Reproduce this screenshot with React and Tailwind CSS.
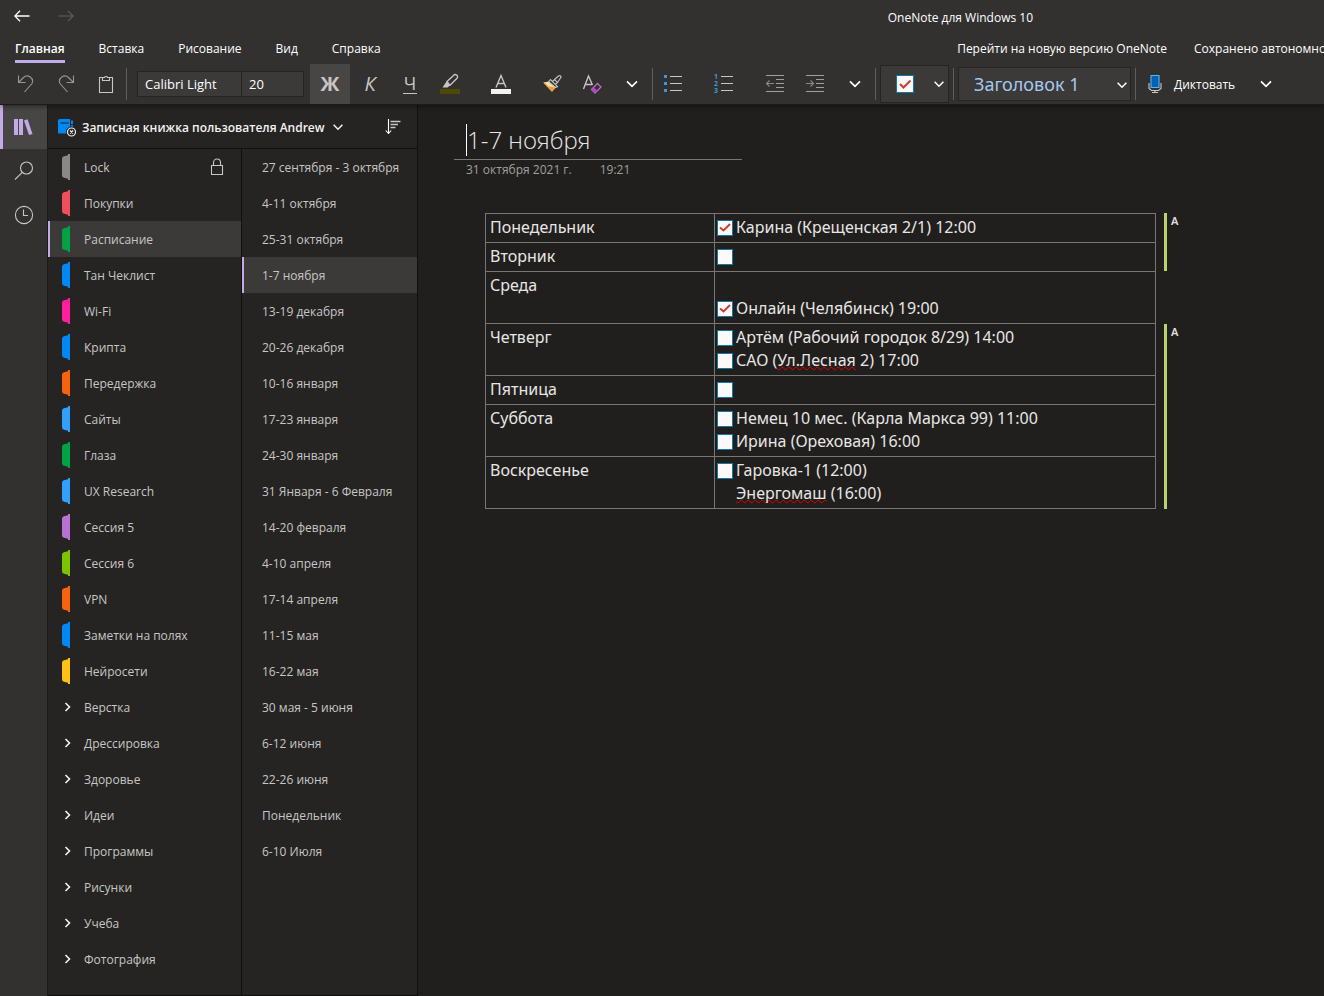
const SECTIONS = [
  { name: 'Lock', color: '#8a8886', locked: true },
  { name: 'Покупки', color: '#ef4f5a' },
  { name: 'Расписание', color: '#00a344', active: true },
  { name: 'Тан Чеклист', color: '#0088f5' },
  { name: 'Wi-Fi', color: '#ff1e9b' },
  { name: 'Крипта', color: '#0088f5' },
  { name: 'Передержка', color: '#f7630c' },
  { name: 'Сайты', color: '#30a0ff' },
  { name: 'Глаза', color: '#00a344' },
  { name: 'UX Research', color: '#30a0ff' },
  { name: 'Сессия 5', color: '#b873d2' },
  { name: 'Сессия 6', color: '#7bc400' },
  { name: 'VPN', color: '#f7630c' },
  { name: 'Заметки на полях', color: '#0088f5' },
  { name: 'Нейросети', color: '#ffc114' },
];

const GROUPS = ['Верстка', 'Дрессировка', 'Здоровье', 'Идеи', 'Программы', 'Рисунки', 'Учеба', 'Фотография'];

const PAGES = [
  '27 сентября - 3 октября',
  '4-11 октября',
  '25-31 октября',
  '1-7 ноября',
  '13-19 декабря',
  '20-26 декабря',
  '10-16 января',
  '17-23 января',
  '24-30 января',
  '31 Января - 6 Февраля',
  '14-20 февраля',
  '4-10 апреля',
  '17-14 апреля',
  '11-15 мая',
  '16-22 мая',
  '30 мая - 5 июня',
  '6-12 июня',
  '22-26 июня',
  'Понедельник',
  '6-10 Июля',
];

const TABS = ['Главная', 'Вставка', 'Рисование', 'Вид', 'Справка'];

const Misspelled = ({ children }) => (
  <span className="underline decoration-[#e60000] decoration-wavy decoration-1 underline-offset-0 [text-decoration-skip-ink:none]">
    {children}
  </span>
);

const SCHEDULE = [
  { day: 'Понедельник', items: [{ text: 'Карина (Крещенская 2/1) 12:00', box: true, done: true }] },
  { day: 'Вторник', items: [{ text: '', box: true }] },
  { day: 'Среда', items: [{ text: '' }, { text: 'Онлайн (Челябинск) 19:00', box: true, done: true }] },
  {
    day: 'Четверг',
    items: [
      { text: 'Артём (Рабочий городок 8/29) 14:00', box: true },
      { text: <>САО (<Misspelled>Ул.Лесная</Misspelled> 2) 17:00</>, box: true },
    ],
  },
  { day: 'Пятница', items: [{ text: '', box: true }] },
  {
    day: 'Суббота',
    items: [
      { text: 'Немец 10 мес. (Карла Маркса 99) 11:00', box: true },
      { text: 'Ирина (Ореховая) 16:00', box: true },
    ],
  },
  {
    day: 'Воскресенье',
    items: [
      { text: 'Гаровка-1 (12:00)', box: true },
      { text: <><Misspelled>Энергомаш</Misspelled> (16:00)</> },
    ],
  },
];

const Svg = ({ w = 20, h = 20, className = '', children }) => (
  <svg
    width={w}
    height={h}
    viewBox={`0 0 ${w} ${h}`}
    fill="none"
    stroke="currentColor"
    strokeWidth="1.1"
    aria-hidden="true"
    className={`shrink-0 ${className}`}
  >
    {children}
  </svg>
);

const Chevron = ({ className = '' }) => (
  <Svg w={12} h={8} className={className}>
    <path d="M1 1.3 6 6.3 11 1.3" strokeWidth="1.7" />
  </Svg>
);

const SmallChevron = ({ className = '' }) => (
  <Svg w={10} h={8} className={className}>
    <path d="M.6 1.8 5 6.2 9.4 1.8" strokeWidth="1.5" />
  </Svg>
);

const Separator = ({ className = '' }) => <span className={`h-8 w-px shrink-0 bg-[#605e5c] ${className}`} />;

const ToolButton = ({ label, pressed, className = '', children }) => (
  <button
    type="button"
    aria-label={label}
    aria-pressed={pressed}
    className={`flex h-10 w-10 shrink-0 items-center justify-center ${pressed ? 'bg-[#484644]' : ''} ${className}`}
  >
    {children}
  </button>
);

const TitleBar = () => (
  <div className="flex h-8 items-center">
    <button type="button" aria-label="Назад" className="flex h-8 w-11 items-center justify-center text-white">
      <Svg w={16} h={12}>
        <path d="M15.5 6H1M6 .8.8 6 6 11.2" strokeWidth="1.3" />
      </Svg>
    </button>
    <button type="button" aria-label="Вперед" disabled className="flex h-8 w-11 items-center justify-center text-[#605e5c]">
      <Svg w={16} h={12}>
        <path d="M.5 6H15M10 .8 15.2 6 10 11.2" />
      </Svg>
    </button>
    <span className="mr-[291px] ml-auto pt-1">OneNote для Windows 10</span>
  </div>
);

const TabBar = () => (
  <div className="flex h-8 items-stretch overflow-hidden pb-px whitespace-nowrap">
    <nav className="flex gap-[34px] pl-[15px]">
      {TABS.map((tab, i) => (
        <a
          key={tab}
          href="#"
          className={`flex items-center border-b-3 pt-1.5 ${i === 0 ? 'border-[#c3abe8] font-semibold' : 'border-transparent'}`}
        >
          {tab}
        </a>
      ))}
    </nav>
    <a href="#" className="ml-auto flex shrink-0 items-center pt-[3px]">Перейти на новую версию OneNote</a>
    <span className="ml-[27px] flex w-[130px] shrink-0 items-center pt-[3px]">Сохранено автономно</span>
  </div>
);

const Toolbar = () => (
  <div className="flex h-10 items-center overflow-hidden pl-1.5 text-[#c8c6c4]">
    <ToolButton label="Отменить" className="text-[#979593]">
      <Svg>
        <path d="M2.5 1.5V8.5H9.5M3 8 7.5 3.5A5.3 5.3 0 0 1 16 9.5L8.5 18" />
      </Svg>
    </ToolButton>
    <ToolButton label="Вернуть" className="text-[#979593]">
      <Svg>
        <path d="M17.5 1.5V8.5H10.5M17 8 12.5 3.5A5.3 5.3 0 0 0 4 9.5L11.5 18" />
      </Svg>
    </ToolButton>
    <ToolButton label="Вставить">
      <Svg>
        <path d="M6.5 3.5H3.5V18.5H16.5V3.5H13.5M6.5 6.5V3.5H8.5A1.6 1.6 0 0 1 11.5 3.5H13.5V6.5Z" />
      </Svg>
    </ToolButton>
    <Separator />
    <div className="ml-2.5 flex h-[26px] shrink-0 border border-[#252423] bg-[#3b3a39] text-[13px] text-white">
      <select aria-label="Шрифт" className="w-[104px] appearance-none border-r border-[#252423] pt-px pl-[7px] outline-none">
        <option>Calibri Light</option>
      </select>
      <select aria-label="Размер шрифта" className="w-[61px] appearance-none pt-px pl-[7px] outline-none">
        <option>20</option>
      </select>
    </div>
    <ToolButton label="Полужирный" pressed className="ml-1.5 text-xl font-bold">Ж</ToolButton>
    <ToolButton label="Курсив" className="text-xl italic">К</ToolButton>
    <ToolButton label="Подчеркнутый">
      <span className="border-b border-current px-px text-lg leading-[19px]">Ч</span>
    </ToolButton>
    <ToolButton label="Цвет выделения">
      <Svg h={22}>
        <path d="M0 16H20V21H0Z" fill="#4d4b00" stroke="none" />
        <path d="M7 8.5 13.5 2.5A2 2 0 0 1 17 5.2L10 12.3Z" strokeWidth="1.3" />
        <path d="M6.5 8.5 10 12.5 7.5 14.5H2.5Z" fill="currentColor" stroke="none" />
      </Svg>
    </ToolButton>
    <ToolButton label="Цвет шрифта" className="ml-[11px]">
      <Svg h={22}>
        <path d="M0 16H20V21H0Z" fill="#f3f2f1" stroke="none" />
        <path d="M5 14.5 10 2.5 15 14.5M6.7 10.5H13.3" strokeWidth="1.4" />
      </Svg>
    </ToolButton>
    <ToolButton label="Формат по образцу" className="ml-[11px]">
      <Svg>
        <path d="M1.3 8.5 10 17.5 14 13 7 7.5Z" fill="#fbe0a6" stroke="none" />
        <path d="M4.5 12 13 13.5 10 17.5Z" fill="#f7981d" stroke="none" />
        <path d="M2 8.5 10 17 13.5 13" stroke="#eda84a" />
        <path
          d="M6.5 7.8 8.5 5.5 15.5 12.5 13.5 13.5ZM10.5 7.5 12.5 5.5 15.5 8.5 13.5 10.5M12.5 5.5 16.5 2A1.3 1.3 0 0 1 18.5 4L15.5 8.5"
          fill="#323130"
        />
      </Svg>
    </ToolButton>
    <ToolButton label="Очистить форматирование">
      <Svg>
        <path d="M1.5 15 6.5 2 10.5 11M3.3 10.5H10" strokeWidth="1.4" />
        <path d="M9.5 15.5 15.5 9.5 19 13 13 19Z" stroke="#b96ac4" strokeWidth="1.3" />
        <path d="M9.5 15.5 11.8 13.2 15.3 16.7 13 19Z" fill="#b146c2" stroke="none" />
      </Svg>
    </ToolButton>
    <ToolButton label="Другие параметры шрифта" className="text-white"><Chevron /></ToolButton>
    <Separator />
    <ToolButton label="Маркеры">
      <Svg h={22}>
        <path d="M7 3.5H19M7 10.5H19M7 17.5H19" />
        <path d="M1 2H4V5H1ZM1 9H4V12H1ZM1 16H4V19H1Z" fill="#3a96dd" stroke="none" />
      </Svg>
    </ToolButton>
    <ToolButton label="Нумерация" className="ml-[11px]">
      <Svg h={22}>
        <path d="M7 3.5H19M7 10.5H19M7 17.5H19" />
        <g fill="#3a96dd" stroke="none" fontSize="7" fontWeight="700">
          <text x="0" y="6">1</text>
          <text x="0" y="13">2</text>
          <text x="0" y="20">3</text>
        </g>
      </Svg>
    </ToolButton>
    <ToolButton label="Уменьшить отступ" className="ml-[11px]">
      <Svg>
        <path d="M1 1.5H19M11 5.5H19M11 9.5H19M11 13.5H19M1 17.5H19" stroke="#a19f9d" />
        <path d="M9 9.5H1.5M4.5 6.5 1.5 9.5 4.5 12.5" stroke="#8a8886" />
      </Svg>
    </ToolButton>
    <ToolButton label="Увеличить отступ">
      <Svg>
        <path d="M1 1.5H19M11 5.5H19M11 9.5H19M11 13.5H19M1 17.5H19" stroke="#a19f9d" />
        <path d="M1 9.5H8.5M5.5 6.5 8.5 9.5 5.5 12.5" stroke="#8a8886" />
      </Svg>
    </ToolButton>
    <ToolButton label="Параметры абзаца" className="text-white"><Chevron /></ToolButton>
    <Separator />
    <button
      type="button"
      aria-label="Теги"
      className="ml-1 flex h-[38px] w-[69px] shrink-0 items-center border border-[#252423] bg-[#3b3a39] pl-[15px] text-white"
    >
      <Svg w={18} h={18}>
        <path d="M.5.5H17.5V17.5H.5Z" fill="#fafafa" stroke="#0f7aa8" />
        <path d="M4 9 7.5 12.5 14.5 5.5" stroke="#d13a2f" strokeWidth="2" />
      </Svg>
      <SmallChevron className="ml-5" />
    </button>
    <Separator className="ml-1" />
    <div className="relative ml-1 shrink-0">
      <select
        aria-label="Стиль"
        className="h-[34px] w-[173px] appearance-none border border-[#252423] bg-[#3b3a39] pl-[15px] font-['Noto_Sans',sans-serif] text-lg text-[#a6c8ee] outline-none"
      >
        <option>Заголовок 1</option>
      </select>
      <SmallChevron className="pointer-events-none absolute top-[14px] right-1 text-white" />
    </div>
    <Separator className="ml-1" />
    <button type="button" className="ml-3 flex shrink-0 items-center gap-3 text-white">
      <Svg w={14} h={20}>
        <path d="M3 1.5H11V13.5H3Z" fill="#0063b1" stroke="#5fb2f2" />
        <path d="M1 9V14.5L3.5 16.5H10.5L13 14.5V9M7 16.5V18.5M4 18.5H10" stroke="#c8c6c4" />
      </Svg>
      <span className="pt-0.5">Диктовать</span>
    </button>
    <ToolButton label="Параметры диктовки" className="ml-[11px] text-white"><Chevron /></ToolButton>
  </div>
);

const Rail = () => (
  <aside className="w-[47px] shrink-0 bg-[#323130] text-[#c8c6c4]">
    <button
      type="button"
      aria-label="Записные книжки"
      className="flex h-11 w-full items-center justify-center border-l-3 border-[#c3abe8] bg-[#484644] pr-1"
    >
      <Svg className="text-[#c3abe8]">
        <path d="M1 2H5V18H1ZM6 2H10V18H6ZM11 3.5 14.5 2.3 19.5 17 16 18Z" fill="currentColor" stroke="none" />
      </Svg>
    </button>
    <button type="button" aria-label="Поиск" className="flex h-11 w-full items-center justify-center">
      <Svg>
        <circle cx="12.5" cy="7" r="6" />
        <path d="M8.3 11.3 1 18.5" />
      </Svg>
    </button>
    <button type="button" aria-label="Последние" className="flex h-11 w-full items-center justify-center">
      <Svg>
        <circle cx="10" cy="10" r="8.6" />
        <path d="M9.5 4.5V10.5H14" />
      </Svg>
    </button>
  </aside>
);

const NavRow = ({ active, icon, children, locked }) => (
  <li>
    <a
      href="#"
      className={`flex h-9 items-center border-l-2 ${active ? 'border-[#c3abe8] bg-[#3b3a39]' : 'border-transparent'}`}
    >
      {icon}
      <span className="pt-px whitespace-nowrap">{children}</span>
      {locked && (
        <Svg w={14} h={18} className="mr-[17px] ml-auto">
          <path d="M1.5 7.5H12.5V16.5H1.5ZM3.5 7.5V4.5A3.5 3.5 0 0 1 10.5 4.5V7.5" />
        </Svg>
      )}
    </a>
  </li>
);

const Navigation = () => (
  <div className="ml-px flex w-[370px] shrink-0 flex-col border-r border-b border-[#11100f] bg-[#252423]">
    <div className="flex h-11 items-center border-b border-[#11100f] pr-4 pl-2.5">
      <button type="button" className="flex items-center font-semibold whitespace-nowrap text-[#f3f2f1]">
        <Svg w={20} h={20}>
          <path d="M0 3 1.5 2H12V14.5L11 16.5H0Z" fill="#0088f5" stroke="none" />
          <path d="M13 3.5H15V7H13ZM13 8H15V10H13Z" fill="#0088f5" stroke="none" />
          <path d="M2.5 6H10.5" stroke="#252423" />
          <circle cx="13.5" cy="15" r="5.5" fill="#252423" stroke="none" />
          <circle cx="13.5" cy="15" r="4" stroke="#f3f2f1" strokeWidth="1.2" />
          <path d="M12 13.5 15 16.5M15 13.5 12 16.5" stroke="#f3f2f1" strokeWidth="1.2" />
        </Svg>
        <span className="ml-1 pt-0.5">Записная книжка пользователя Andrew</span>
        <SmallChevron className="ml-2" />
      </button>
      <button type="button" aria-label="Сортировка" className="ml-auto text-[#c8c6c4]">
        <Svg w={16} h={18}>
          <path d="M3.5 1V15.5M.8 12.5 3.5 15.5 6.2 12.5" stroke="#fff" />
          <path d="M5.5 3.5H15.5M5.5 6.5H13M5.5 9.5H10.5" strokeWidth="1.6" />
        </Svg>
      </button>
    </div>
    <div className="flex flex-1 text-[#c8c6c4]">
      <ul className="w-[194px] border-r border-[#11100f]">
        {SECTIONS.map(({ name, color, locked, active }) => (
          <NavRow
            key={name}
            active={active}
            locked={locked}
            icon={
              <Svg w={8} h={26} className="mr-3.5 ml-3">
                <path d="M0 5Q0 2.5 2 2.2L6 1.3V0H8V26H6V24.7L2 23.8Q0 23.5 0 21Z" fill={color} stroke="none" />
              </Svg>
            }
          >
            {name}
          </NavRow>
        ))}
        {GROUPS.map((name) => (
          <NavRow
            key={name}
            icon={
              <Svg w={8} h={10} className="mr-3 ml-3.5 text-[#f3f2f1]">
                <path d="M1.5 1 5.5 5 1.5 9" strokeWidth="1.6" />
              </Svg>
            }
          >
            {name}
          </NavRow>
        ))}
      </ul>
      <ul className="flex-1">
        {PAGES.map((name) => (
          <NavRow key={name} active={name === '1-7 ноября'} icon={<span className="w-[18px]" />}>
            {name}
          </NavRow>
        ))}
      </ul>
    </div>
  </div>
);

const TaskLine = ({ item, label }) => (
  <label className="flex h-[23px] items-center gap-[3px]">
    {item.box ? (
      <span className="grid h-4 w-4 shrink-0">
        <input
          type="checkbox"
          aria-label={label}
          defaultChecked={item.done}
          className="peer col-start-1 row-start-1 h-4 w-4 appearance-none border border-[#0f7aa8] bg-[#fafafa]"
        />
        <Svg w={16} h={16} className="pointer-events-none invisible col-start-1 row-start-1 peer-checked:visible">
          <path d="M3 7.5 6.5 10.5 13 4" stroke="#d13a2f" strokeWidth="2" />
        </Svg>
      </span>
    ) : (
      <span className="w-4 shrink-0" />
    )}
    <span>{item.text}</span>
  </label>
);

const Author = ({ className }) => (
  <div className={`border-l-3 border-[#b9d46c] pl-1 text-[11px] leading-4 font-semibold text-[#e1dfdd] ${className}`}>A</div>
);

const Page = () => (
  <main className="min-w-0 flex-1 overflow-hidden bg-[#201f1e] pt-4 pl-9 text-[#e8e6e4]">
    <header className="w-72">
      <div className="flex h-[39px] items-center border-b border-[#797775] pl-3">
        <h1 className="border-l border-white text-2xl leading-8 font-light">1-7 ноября</h1>
      </div>
      <p className="flex gap-7 pl-3 text-xs leading-5 text-[#a19f9d]">
        <time>31 октября 2021 г.</time>
        <time>19:21</time>
      </p>
    </header>
    <div className="mt-[33px] ml-[31px] flex font-['Noto_Sans',sans-serif] text-base leading-[23px]">
      <table className="w-[671px] shrink-0 table-fixed border-collapse">
        <tbody>
          {SCHEDULE.map(({ day, items }) => (
            <tr key={day}>
              <td className="w-[229px] border border-[#797775] pt-0.5 pb-[3px] pl-1 align-top">{day}</td>
              <td className="border border-[#797775] pt-0.5 pb-[3px] pl-0.5 align-top">
                {items.map((item, i) => (
                  <TaskLine key={i} item={item} label={day} />
                ))}
              </td>
            </tr>
          ))}
        </tbody>
      </table>
      <div className="ml-2 flex flex-col">
        <Author className="h-[58px]" />
        <Author className="mt-[53px] flex-1" />
      </div>
    </div>
  </main>
);

const App = () => (
  <div className="flex min-h-screen flex-col overflow-hidden bg-[#1b1a19] font-['Open_Sans','Noto_Sans',sans-serif] text-xs text-white">
    <header className="relative z-10 border-b border-[#1b1a19] bg-[#323130] shadow-[0_1px_5px_rgba(0,0,0,0.5)]">
      <TitleBar />
      <TabBar />
      <Toolbar />
    </header>
    <div className="flex flex-1">
      <Rail />
      <Navigation />
      <Page />
    </div>
  </div>
);

export default App;
